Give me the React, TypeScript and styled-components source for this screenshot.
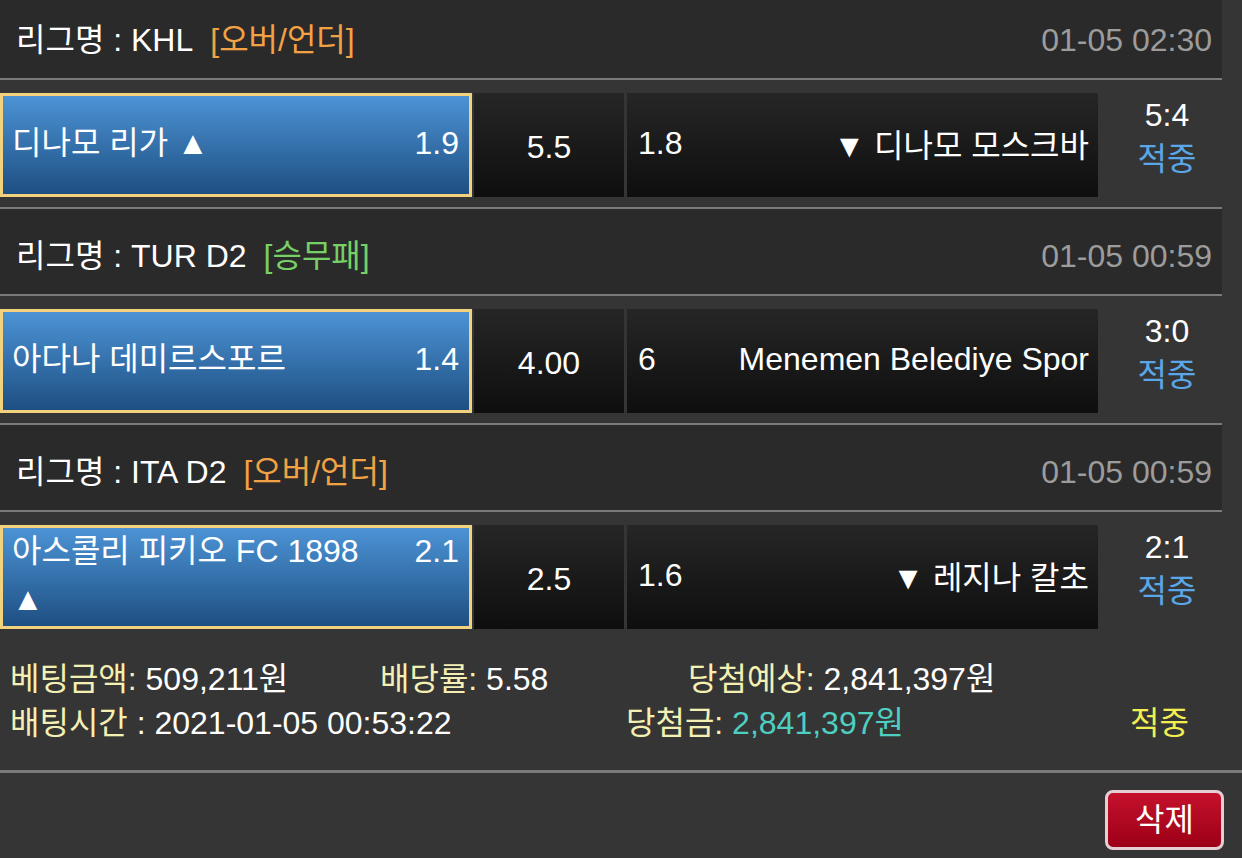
import React from "react";
import styled, { createGlobalStyle } from "styled-components";

const Global = createGlobalStyle`
  html, body {
    margin: 0;
    padding: 0;
    background: #353535;
    overflow: hidden;
  }
  body {
    font-family: "Liberation Sans", "Noto Sans CJK KR", sans-serif;
    font-size: 32px;
    color: #fff;
  }
`;

const Page = styled.div`
  width: 1242px;
  height: 858px;
  overflow: hidden;
  background: #353535;
`;

const List = styled.div`
  width: 1222px;
  margin-top: -7px;
`;

const Header = styled.div`
  height: 87px;
  box-sizing: border-box;
  padding: 8px 10px 0 16px;
  background: #2a2a2a;
  border-bottom: 2px solid #7a7a7a;
  display: flex;
  align-items: center;
  line-height: 1;
`;

const LeagueName = styled.span`
  color: #fff;
`;

const BetType = styled.span<{ $tone: "orange" | "green" }>`
  margin-left: 17px;
  color: ${(p) => (p.$tone === "orange" ? "#f2a244" : "#76d066")};
`;

const DateText = styled.span`
  margin-left: auto;
  color: #9c9c9c;
`;

const MatchRow = styled.div<{ $last?: boolean }>`
  display: grid;
  grid-template-columns: 472px 150px 472px 1fr;
  column-gap: 2px;
  padding: 13px 0 10px 0;
  border-bottom: ${(p) => (p.$last ? "none" : "2px solid #7a7a7a")};
  background: #353535;
`;

const HomeCell = styled.div`
  height: 104px;
  box-sizing: border-box;
  border: 3px solid #f2d27c;
  background: linear-gradient(to bottom, #4c93d5, #1e4f82);
  display: flex;
  align-items: center;
  padding: 0 10px 4px 9px;
  line-height: 48px;
`;

const HomeInner = styled.div`
  flex: 1;
  display: flex;
  align-items: flex-start;
  justify-content: space-between;
`;

const TeamName = styled.span`
  max-width: 380px;
`;

const Odds = styled.span`
  flex-shrink: 0;
`;

const DarkCell = styled.div`
  height: 104px;
  box-sizing: border-box;
  background: linear-gradient(to bottom, #262626, #0e0e0e);
  display: flex;
  align-items: center;
`;

const DrawCell = styled(DarkCell)`
  justify-content: center;
  padding-top: 4px;
`;

const AwayCell = styled(DarkCell)`
  justify-content: space-between;
  padding: 0 9px 4px 11px;
  margin-left: 1px;
`;

const ResultCol = styled.div`
  display: flex;
  flex-direction: column;
  align-items: center;
  padding-left: 12px;
  line-height: 44px;
`;

const Score = styled.span`
  color: #fff;
`;

const Hit = styled.span`
  color: #5aa6e6;
`;

const Summary = styled.div`
  padding: 18px 0 25px 10px;
  border-bottom: 3px solid #7a7a7a;
  line-height: 44px;
`;

const SummaryLine = styled.div`
  display: flex;
  white-space: nowrap;
`;

const Item = styled.span<{ $w?: number }>`
  ${(p) => (p.$w ? `width: ${p.$w}px;` : "")}
  flex-shrink: 0;
`;

const Label = styled.span`
  color: #f4f0b4;
`;

const Val = styled.span<{ $tone?: "teal" }>`
  color: ${(p) => (p.$tone === "teal" ? "#4ecfc1" : "#fff")};
`;

const HitYellow = styled.span`
  color: #f2ee52;
`;

const Footer = styled.div`
  display: flex;
  justify-content: flex-end;
  padding: 17px 18px 0 0;
`;

const DeleteButton = styled.button`
  width: 119px;
  height: 60px;
  box-sizing: border-box;
  border: 3px solid #e6cfd3;
  border-radius: 8px;
  background: linear-gradient(to bottom, #c5112c, #9c0017);
  color: #fff;
  font-family: "Liberation Sans", "Noto Sans CJK KR", sans-serif;
  font-size: 32px;
  padding: 0;
  line-height: 1;
  cursor: pointer;
`;

type Match = {
  league: string;
  type: string;
  tone: "orange" | "green";
  date: string;
  home: string;
  homeOdds: string;
  draw: string;
  awayOdds: string;
  away: string;
  score: string;
};

const matches: Match[] = [
  {
    league: "KHL",
    type: "[오버/언더]",
    tone: "orange",
    date: "01-05 02:30",
    home: "디나모 리가 ▲",
    homeOdds: "1.9",
    draw: "5.5",
    awayOdds: "1.8",
    away: "▼ 디나모 모스크바",
    score: "5:4",
  },
  {
    league: "TUR D2",
    type: "[승무패]",
    tone: "green",
    date: "01-05 00:59",
    home: "아다나 데미르스포르",
    homeOdds: "1.4",
    draw: "4.00",
    awayOdds: "6",
    away: "Menemen Belediye Spor",
    score: "3:0",
  },
  {
    league: "ITA D2",
    type: "[오버/언더]",
    tone: "orange",
    date: "01-05 00:59",
    home: "아스콜리 피키오 FC 1898 ▲",
    homeOdds: "2.1",
    draw: "2.5",
    awayOdds: "1.6",
    away: "▼ 레지나 칼초",
    score: "2:1",
  },
];

export default function App() {
  return (
    <Page>
      <Global />
      <List>
        {matches.map((m, i) => (
          <React.Fragment key={i}>
            <Header>
              <LeagueName>리그명 : {m.league}</LeagueName>
              <BetType $tone={m.tone}>{m.type}</BetType>
              <DateText>{m.date}</DateText>
            </Header>
            <MatchRow $last={i === matches.length - 1}>
              <HomeCell>
                <HomeInner>
                  <TeamName>{m.home}</TeamName>
                  <Odds>{m.homeOdds}</Odds>
                </HomeInner>
              </HomeCell>
              <DrawCell>{m.draw}</DrawCell>
              <AwayCell>
                <span>{m.awayOdds}</span>
                <span>{m.away}</span>
              </AwayCell>
              <ResultCol>
                <Score>{m.score}</Score>
                <Hit>적중</Hit>
              </ResultCol>
            </MatchRow>
          </React.Fragment>
        ))}
      </List>
      <Summary>
        <SummaryLine>
          <Item $w={370}>
            <Label>베팅금액:</Label> <Val>509,211원</Val>
          </Item>
          <Item $w={308}>
            <Label>배당률:</Label> <Val>5.58</Val>
          </Item>
          <Item>
            <Label>당첨예상:</Label> <Val>2,841,397원</Val>
          </Item>
        </SummaryLine>
        <SummaryLine>
          <Item $w={616}>
            <Label>배팅시간</Label> <Val>: 2021-01-05 00:53:22</Val>
          </Item>
          <Item $w={504}>
            <Label>당첨금:</Label> <Val $tone="teal">2,841,397원</Val>
          </Item>
          <Item>
            <HitYellow>적중</HitYellow>
          </Item>
        </SummaryLine>
      </Summary>
      <Footer>
        <DeleteButton>삭제</DeleteButton>
      </Footer>
    </Page>
  );
}
